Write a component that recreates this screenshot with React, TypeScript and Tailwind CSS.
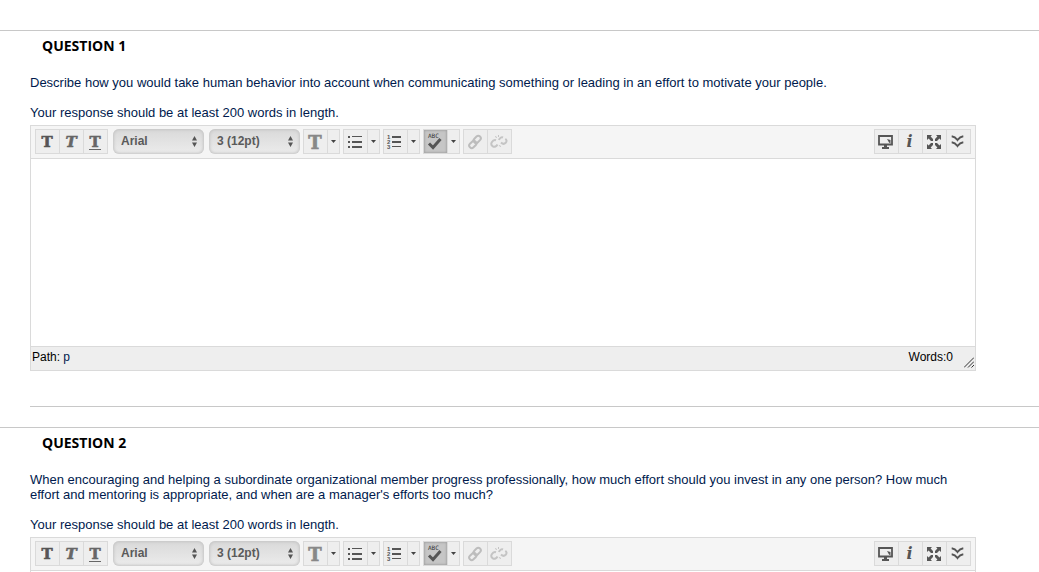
import { useState } from 'react';
import type { ReactNode } from 'react';

const questions = [
  {
    title: 'QUESTION 1',
    text: 'Describe how you would take human behavior into account when communicating something or leading in an effort to motivate your people.',
  },
  {
    title: 'QUESTION 2',
    text: "When encouraging and helping a subordinate organizational member progress professionally, how much effort should you invest in any one person? How much effort and mentoring is appropriate, and when are a manager's efforts too much?",
  },
];

function ToolButton({ label, active, children }: { label: string; active?: boolean; children: ReactNode }) {
  return (
    <button
      type="button"
      aria-label={label}
      className={`flex h-full w-6 items-center justify-center border-r border-[#dadada] pr-0.5 ${active ? 'bg-[#c6c6c6] shadow-[inset_0_0_2px_1px_#a8a8a8]' : ''}`}
    >
      {children}
    </button>
  );
}

function Group({ children }: { children: ReactNode }) {
  return (
    <div className="flex h-[25px] shrink-0 border-y border-l border-[#dadada] bg-[#eeeeee]">
      {children}
    </div>
  );
}

// Icon button with a small drop-down arrow next to it
function SplitButton({ label, active, children }: { label: string; active?: boolean; children: ReactNode }) {
  return (
    <Group>
      <ToolButton label={label} active={active}>{children}</ToolButton>
      <button
        type="button"
        aria-label={`${label} options`}
        className="flex h-full w-3 items-center justify-center border-r border-[#dadada]"
      >
        <svg className="h-[3px] w-[5px]" viewBox="0 0 5 3" fill="#444">
          <path d="M0 0h5L2.5 3z" />
        </svg>
      </button>
    </Group>
  );
}

function ToolSelect({ label, options }: { label: string; options: string[] }) {
  return (
    <div className="relative h-[25px] w-[91px] shrink-0">
      <select
        aria-label={label}
        className="h-full w-full appearance-none rounded-[6px] bg-linear-to-b from-[#d9d9d9] to-[#ececec] pb-0.5 pl-2 text-xs font-bold text-[#5a5a5a] shadow-[inset_0_0_3px_1px_#c4c4c4]"
      >
        {options.map((option) => (
          <option key={option}>{option}</option>
        ))}
      </select>
      <svg className="pointer-events-none absolute top-[7px] right-[7px] h-[11px] w-[5px]" viewBox="0 0 5 11" fill="#555">
        <path d="M0 4.5L2.5 0 5 4.5zM0 6.5h5L2.5 11z" />
      </svg>
    </div>
  );
}

function LetterT({ className, underline, large }: { className: string; underline?: boolean; large?: boolean }) {
  return (
    <svg
      className={`h-[18px] w-[18px] overflow-visible font-['DejaVu_Serif',serif] font-bold ${className}`}
      viewBox="0 0 18 18"
      fill="currentColor"
    >
      <text x="9" y={large ? 16 : 14} textAnchor="middle" stroke="currentColor" strokeWidth="0.6">T</text>
      {underline && <path d="M3 16h12v1H3z" />}
    </svg>
  );
}

function BulletsIcon() {
  return (
    <svg className="h-[13px] w-[14px]" viewBox="0 0 14 13" fill="#555">
      <path d="M0 1h2v2H0zM0 6h2v2H0zM0 11h2v2H0zM4 1h10v1H4zM4 6h10v2H4zM4 11h10v2H4z" />
    </svg>
  );
}

function NumbersIcon() {
  return (
    <svg className="h-[15px] w-[16px] overflow-visible" viewBox="0 0 16 15">
      <path d="M5 2h9v2H5zM5 7h9v2H5zM5 12h9v1H5z" fill="#555" />
      <g fill="#555" fontSize="6" fontWeight="700">
        <text x="0" y="5">1</text>
        <text x="0" y="10">2</text>
        <text x="0" y="15">3</text>
      </g>
    </svg>
  );
}

function SpellIcon() {
  return (
    <svg className="h-[19px] w-[18px] overflow-visible" viewBox="0 0 18 19">
      <text x="2" y="6" fontSize="6" fill="#333" fontFamily="DejaVu Sans Mono, monospace">ABC</text>
      <path d="M3 11.500l4 4L14.500 7" fill="none" stroke="#555" strokeWidth="3" />
    </svg>
  );
}

function LinkIcon() {
  return (
    <svg className="h-[16px] w-[16px]" viewBox="0 0 16 16" fill="none" stroke="#bdbdbd" strokeWidth="2">
      <rect x="6.2" y="2.900" width="8" height="5" rx="2.5" transform="rotate(-45 10.2 5.4)" />
      <rect x="1.8" y="8" width="8" height="5" rx="2.5" transform="rotate(-45 5.8 10.5)" />
    </svg>
  );
}

function UnlinkIcon() {
  return (
    <svg className="h-[16px] w-[18px]" viewBox="0 0 18 16" fill="none" stroke="#c4c4c4" strokeWidth="2">
      <path d="M6 6.200C4 5.500 2.500 7 1.800 8.200C.8 10 1.500 11.500 2.800 12.300C4.500 13.300 6.500 12.500 7.500 10.500" />
      <path d="M9 6C9.500 4 11.500 2.800 13 3.500M11 8.500C12.500 10 14.500 10 15.700 8.800C17 7.500 16.800 5.800 15.300 4.800" />
      <path d="M5.500 2l1 2M8.500 1v2M9.500 11l1 2" strokeWidth="1" />
    </svg>
  );
}

function PreviewIcon() {
  return (
    <svg className="h-[14px] w-[16px]" viewBox="0 0 16 14">
      <path d="M1 1h13v8.500H1z" fill="none" stroke="#555" strokeWidth="1.800" />
      <path d="M9 4l3.500 1v3.500L11 7.500zM6 10h3v2h2v2H4v-2h2z" fill="#555" />
    </svg>
  );
}

function FullscreenIcon() {
  return (
    <svg className="h-[14px] w-[14px]" viewBox="0 0 14 14" fill="#555">
      <path d="M0 0h5L3.600 1.600 6 4v2H4L1.600 3.600 0 5zM14 0H9l1.400 1.600L8 4v2h2l2.400-2.400L14 5zM0 14h5l-1.400-1.600L6 10V8H4l-2.400 2.400L0 9zM14 14H9l1.400-1.600L8 10V8h2l2.400 2.400L14 9z" />
    </svg>
  );
}

function ChevronsIcon() {
  return (
    <svg className="h-[13px] w-[13px]" viewBox="0 0 13 13" fill="none" stroke="#555" strokeWidth="2">
      <path d="M.7 1.200c2.300.3 4.300 1.800 5.800 3.800 1.500-2 3.500-3.500 5.800-3.800M.7 7.200c2.300.3 4.300 1.800 5.800 3.800 1.500-2 3.500-3.500 5.800-3.800" />
    </svg>
  );
}

function Toolbar() {
  return (
    <div className="flex h-[33px] justify-between border-b border-[#dadada] bg-[#f5f5f5] px-1 pt-[3px]">
      <div className="flex gap-[3px]">
        <Group>
          <ToolButton label="Bold"><LetterT className="text-[15px] text-[#555]" /></ToolButton>
          <ToolButton label="Italic"><LetterT className="text-[15px] text-[#666] italic" /></ToolButton>
          <ToolButton label="Underline"><LetterT className="text-[15px] text-[#666]" underline /></ToolButton>
        </Group>
        <div className="flex gap-[5px] pl-0.5">
          <ToolSelect label="Font family" options={['Arial', 'Courier', 'Georgia', 'Verdana']} />
          <ToolSelect label="Font size" options={['3 (12pt)', '1 (8pt)', '2 (10pt)', '4 (14pt)']} />
        </div>
        <SplitButton label="Text color"><LetterT className="text-[18px] text-[#888]" large /></SplitButton>
        <SplitButton label="Bulleted list"><BulletsIcon /></SplitButton>
        <SplitButton label="Numbered list"><NumbersIcon /></SplitButton>
        <SplitButton label="Spell check" active><SpellIcon /></SplitButton>
        <Group>
          <ToolButton label="Insert link"><LinkIcon /></ToolButton>
          <ToolButton label="Remove link"><UnlinkIcon /></ToolButton>
        </Group>
      </div>
      <Group>
        <ToolButton label="Preview"><PreviewIcon /></ToolButton>
        <ToolButton label="Help">
          <span className="font-['DejaVu_Serif',serif] text-base leading-5 font-bold text-[#555] italic">i</span>
        </ToolButton>
        <ToolButton label="Full screen"><FullscreenIcon /></ToolButton>
        <ToolButton label="Show more"><ChevronsIcon /></ToolButton>
      </Group>
    </div>
  );
}

function Editor({ label }: { label: string }) {
  const [value, setValue] = useState('');
  const words = value.split(/\s+/).filter(Boolean).length;

  return (
    <div className="border border-[#dadada]">
      <Toolbar />
      <textarea
        aria-label={label}
        value={value}
        onChange={(e) => setValue(e.target.value)}
        className="block h-[187px] w-full resize-none bg-white p-2 outline-none"
      />
      <div className="flex h-6 justify-between border-t border-[#dadada] bg-[#eeeeee] px-px text-xs leading-5 text-black">
        <span>Path: <a href="#path" className="text-[#001a4d]">p</a></span>
        <div className="flex items-end gap-[11px]">
          <span className="self-start">Words:{words}</span>
          <svg className="mb-0.5 h-[11px] w-[10px]" viewBox="0 0 10 11" stroke="#333" strokeWidth="1">
            <path d="M0 10.500L10 .5M4 10.500l6-6M7.500 10.500l2.500-2.500" />
          </svg>
        </div>
      </div>
    </div>
  );
}

export default function App() {
  return (
    <main className="h-screen overflow-hidden bg-white pt-[30px] font-['Liberation_Sans',Arial,sans-serif] text-[13px] leading-[15px] text-[#001a4d]">
      {questions.map((question) => (
        <section key={question.title} className="border-t border-[#c8c8c8]">
          <h2 className="h-11 pt-[5px] pl-[42px] font-['Open_Sans',sans-serif] text-sm leading-5 font-bold text-black">
            {question.title}
          </h2>
          <div className="mr-[63px] ml-[30px]">
            <p className="mb-[15px]">{question.text}</p>
            <p className="mb-[5px]">Your response should be at least 200 words in length.</p>
            <Editor label={question.title} />
          </div>
          <hr className="mt-[35px] mb-5 ml-[30px] border-[#c8c8c8]" />
        </section>
      ))}
    </main>
  );
}
